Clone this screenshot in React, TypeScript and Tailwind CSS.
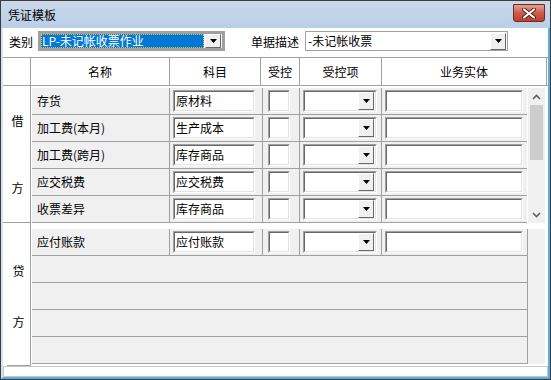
import React from 'react'

const debit = [
  { name: '存货', acct: '原材料' },
  { name: '加工费(本月)', acct: '生产成本' },
  { name: '加工费(跨月)', acct: '库存商品' },
  { name: '应交税费', acct: '应交税费' },
  { name: '收票差异', acct: '库存商品' },
]

function Sunken({ className = '', children }: { className?: string; children?: React.ReactNode }) {
  return (
    <div className={`border border-t-[#a0a0a0] border-l-[#a0a0a0] border-b-white border-r-white ${className}`}>
      <div className="h-full w-full border border-t-[#696969] border-l-[#696969] border-b-[#e3e3e3] border-r-[#e3e3e3] bg-white flex items-center">
        {children}
      </div>
    </div>
  )
}

function DropBtn() {
  return (
    <div className="w-[16px] h-full bg-[#f0f0f0] border border-t-white border-l-white border-b-[#696969] border-r-[#696969] flex items-center justify-center shrink-0">
      <svg width="7" height="4" viewBox="0 0 7 4">
        <path d="M0 0h7L3.5 4z" fill="#000" />
      </svg>
    </div>
  )
}

function Chevron({ up }: { up?: boolean }) {
  return (
    <svg width="9" height="6" viewBox="0 0 9 6">
      <path d={up ? 'M1 5l3.5-3.5L8 5' : 'M1 1l3.5 3.5L8 1'} fill="none" stroke="#606060" strokeWidth="1.6" />
    </svg>
  )
}

function Row({ name, acct }: { name: string; acct: string }) {
  return (
    <div className="flex h-[27px] bg-[#f0f0f0] border-b border-[#a0a0a0]">
      <div className="w-[138px] border-r border-[#a0a0a0] pl-[5px] flex items-center">{name}</div>
      <div className="w-[93px] border-r border-[#a0a0a0] pl-[3px] flex items-center">
        <Sunken className="w-[82px] h-[22px]"><span className="pl-[1px]">{acct}</span></Sunken>
      </div>
      <div className="w-[37px] border-r border-[#a0a0a0] pl-[5px] flex items-center">
        <Sunken className="w-[22px] h-[22px]" />
      </div>
      <div className="w-[82px] border-r border-[#a0a0a0] pl-[3px] flex items-center">
        <Sunken className="w-[74px] h-[22px]">
          <div className="flex-1" />
          <div className="h-[18px] pr-[1px]"><DropBtn /></div>
        </Sunken>
      </div>
      <div className="w-[145px] pl-[3px] flex items-center">
        <Sunken className="w-[138px] h-[22px]" />
      </div>
    </div>
  )
}

export default function App() {
  return (
    <div className="w-[551px] h-[380px] flex flex-col border border-[#3c3c3c] bg-white text-[12px] text-black font-['SimSun','Noto_Sans_CJK_SC',sans-serif] leading-none">
      {/* title bar */}
      <div className="h-[27px] shrink-0 flex items-center bg-gradient-to-b from-[#cbd8e8] to-[#b9cfe8] pl-[7px] pr-[5px]">
        <span className="text-[12px] text-black">凭证模板</span>
        <div className="ml-auto w-[32px] h-[18px] -mt-[3px] rounded-b-[3px] border border-[#6d2a21] bg-gradient-to-b from-[#e2a194] via-[#cc5a4b] to-[#c0402f] flex items-center justify-center">
          <svg width="14" height="11" viewBox="0 0 14 11">
            <path d="M2 1.5l10 8M12 1.5l-10 8" stroke="#5a1e17" strokeWidth="4" strokeLinecap="round" />
            <path d="M2 1.5l10 8M12 1.5l-10 8" stroke="#fff" strokeWidth="2.2" strokeLinecap="round" />
          </svg>
        </div>
      </div>

      <div className="flex-1 flex flex-col border-x-2 border-b-2 border-l-[#d6e4f2] border-r-[#58b0e0] border-b-[#58b0e0] min-h-0">
        {/* top selectors */}
        <div className="h-[29px] shrink-0 flex items-start pt-[3px] pl-[6px]">
          <span className="mt-[5px]">类别</span>
          <div className="ml-[5px] w-[187px] h-[20px] border-[3px] border-[#a0a0a0] flex items-center bg-white">
            <div className="flex-1 h-full bg-[#0078d7] text-white outline-dotted outline-1 outline-[#e8c040] -outline-offset-1 flex items-center pl-[1px]">
              LP-未记帐收票作业
            </div>
            <div className="h-full pl-[1px] w-[18px]"><DropBtn /></div>
          </div>
          <span className="ml-[26px] mt-[5px]">单据描述</span>
          <div className="ml-[6px] w-[203px] h-[20px] border border-[#a0a0a0] bg-white flex items-center">
            <span className="flex-1 pl-[2px]">-未记帐收票</span>
            <div className="h-[17px] pr-[1px]"><DropBtn /></div>
          </div>
        </div>

        {/* grid */}
        <div className="border-t border-[#a0a0a0] flex flex-col">
          <div className="h-[28px] flex border-b border-[#a0a0a0] bg-white">
            <div className="w-[28px] border-r border-[#a0a0a0]" />
            <div className="w-[139px] border-r border-[#a0a0a0] flex items-center justify-center">名称</div>
            <div className="w-[91px] border-r border-[#a0a0a0] flex items-center justify-center">科目</div>
            <div className="w-[39px] border-r border-[#a0a0a0] flex items-center justify-center">受控</div>
            <div className="w-[82px] border-r border-[#a0a0a0] flex items-center justify-center">受控项</div>
            <div className="w-[165px] border-r border-[#a0a0a0] flex items-center justify-center">业务实体</div>
          </div>

          <div className="flex">
            {/* side labels */}
            <div className="w-[28px] shrink-0 border-r border-[#a0a0a0] flex flex-col">
              <div className="h-[137px] border-b border-[#a0a0a0] flex flex-col items-center justify-center gap-[55px] pl-[2px]">
                <span>借</span>
                <span>方</span>
              </div>
              <div className="h-[143px] ml-[4px] border-b border-[#a0a0a0] flex flex-col items-center justify-center gap-[39px] pt-[4px]">
                <span>贷</span>
                <span>方</span>
              </div>
            </div>

            <div className="flex-1 pl-[1px] flex flex-col">
              {/* debit */}
              <div className="pt-[2px] flex">
                <div className="flex flex-col">
                  {debit.map(r => (
                    <Row key={r.name} name={r.name} acct={r.acct} />
                  ))}
                </div>
                <div className="ml-[1px] w-[17px] bg-[#f0f0f0] flex flex-col">
                  <div className="h-[17px] flex items-center justify-center"><Chevron up /></div>
                  <div className="mx-[2px] h-[55px] bg-[#cdcdcd]" />
                  <div className="flex-1" />
                  <div className="h-[17px] flex items-center justify-center"><Chevron /></div>
                </div>
              </div>

              {/* credit */}
              <div className="pt-[6px] flex">
                <div className="flex flex-col border-b border-[#a0a0a0]">
                  <Row name="应付账款" acct="应付账款" />
                  <div className="h-[27px] bg-[#f0f0f0] border-b border-[#a0a0a0]" />
                  <div className="h-[27px] bg-[#f0f0f0] border-b border-[#a0a0a0]" />
                  <div className="h-[27px] bg-[#f0f0f0] border-b border-[#a0a0a0]" />
                  <div className="h-[26px] bg-[#f0f0f0] w-[495px]" />
                </div>
                <div className="w-[18px] bg-[#f0f0f0] border-l border-[#a0a0a0]" />
              </div>
            </div>
          </div>
        </div>

        {/* bottom strip */}
        <div className="flex-1 border border-[#c8c8c8] bg-white" />
      </div>
    </div>
  )
}
